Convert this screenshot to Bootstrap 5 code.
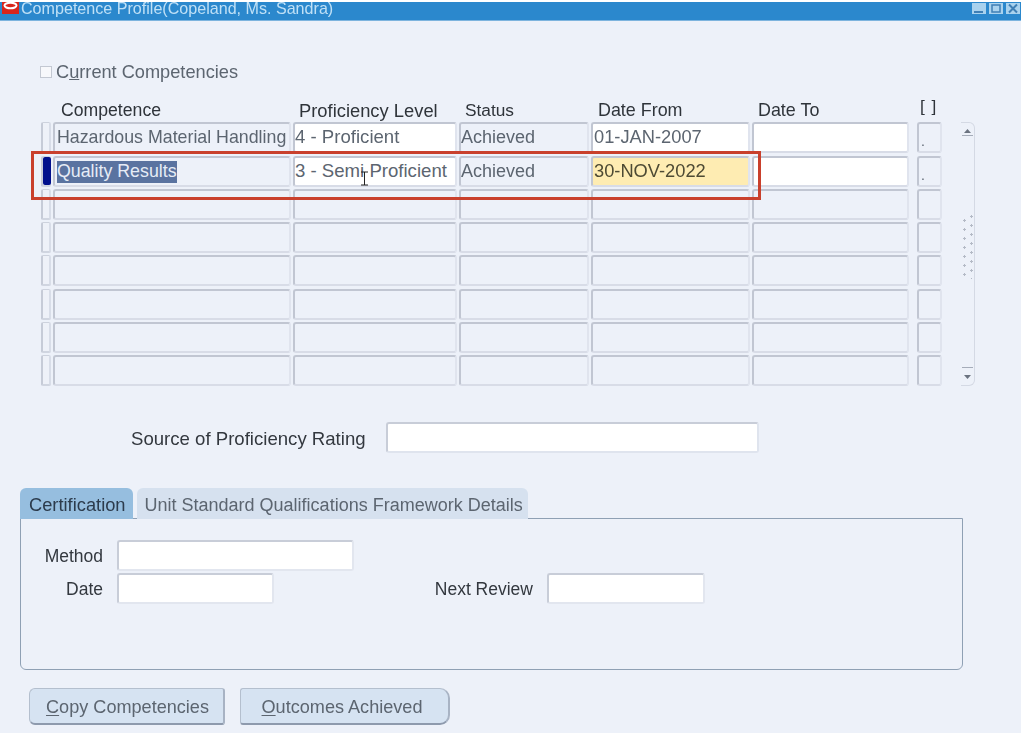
<!DOCTYPE html>
<html lang="en">
<head>
<meta charset="utf-8">
<title>Competence Profile</title>
<link rel="stylesheet" href="https://cdn.jsdelivr.net/npm/bootstrap@5.3.0/dist/css/bootstrap.min.css">
<style>
html,body{height:733px;overflow:hidden}
body{background:#edf1f9;font-family:"Liberation Sans",Arial,sans-serif;font-size:18.2px;color:#33383f;line-height:1.2;position:relative;filter:blur(.35px)}
.ttl{height:21px;background:linear-gradient(#fff 0 2px,#2b88cd 2px 20px,#7db4de 20px);color:#bfe0f6;font-size:16.1px;padding:0 1px 0 2px}
.ttl-txt{margin-left:2px;line-height:17px}
.ttl-logo{margin-top:2px}
.ttl-btns{gap:3px;margin-top:3px}
.wbtn{display:block}
.cur-row{margin:42px 0 0 40px;height:20px;gap:3px;color:#5c6570}
.cur-row .form-check-input{width:12px;height:12px;margin:-3px 1px 0 0;border:1px solid #c3c8d2;border-radius:0;background-color:#f7f8fb;flex:none}
.ora-wrap{margin:15px 0 0 41px}
.ora-grid{display:grid;grid-template-columns:10px 238px 164px 130px 159px 157px 31px;column-gap:2px;grid-template-rows:22px repeat(8,31px);row-gap:2.3px}
.hd{display:flex;align-items:center;color:#2f343a;white-space:nowrap;height:22px;padding-top:4px;font-size:17.9px}
.hd:nth-child(2){padding-left:8px;font-size:17.65px}.hd:nth-child(3){padding-left:6px;font-size:18.35px;padding-top:3px}.hd:nth-child(4){padding-left:6px;font-size:17.3px;padding-top:2px}.hd:nth-child(5){padding-left:7px}.hd:nth-child(6){padding-left:6px}
.hd.hd-sq{margin-left:9px;padding:0 0 6px;letter-spacing:1px;font-size:17.3px}
.fld{display:flex;align-items:center;border:2px solid;border-color:#c1c6d2 #e0e4ee #d8dce7 #c1c6d2;border-radius:3px;background:#edf1f9;padding:0;color:#5c6570;white-space:nowrap;overflow:hidden;min-height:0}
.fld.ed{background:#fff}
.fld.cur{background:#feecb2;color:#4d4a34}
.c1{padding-left:2px;font-size:17.8px}
.c2{font-size:18.6px}
.c3{font-size:18px}
.c4{padding-left:1px;font-size:18.3px}
.up1{padding-bottom:2px}
.dn1{padding-top:2px}
.rind{border-width:1px 2px 2px 2px;border-color:#cdd2dd #d8dde8 #d0d5e0 #c6cbd7;border-radius:2px;background:#eef1f8}
.rind-on{position:relative;overflow:visible}
.rind-on::after{content:"";position:absolute;left:0;top:0;bottom:0;width:8px;background:#000f8c;border-radius:2px}
.more{margin-left:6px;width:25px;padding:8px 0 0 2px;font-size:14px;color:#5c6570}
.sel{background:#5a73a0;color:#e6ecf6}
.scrl{width:14px;margin:24px 0 0 19px;height:264px;border:1px solid #d4d9e4;border-left:0;border-radius:0 6px 6px 0;position:relative;flex:none}
.scrl-dots{position:absolute;left:2px;top:92px;width:10px;height:64px;background-size:3px 9px,3px 9px;background-repeat:repeat-y,repeat-y;background-position:0 4px,7px 0;background-image:radial-gradient(circle at 50% 1.5px,#b4bac6 1px,transparent 1.2px),radial-gradient(circle at 50% 1.5px,#b4bac6 1px,transparent 1.2px)}
.scrl svg{position:absolute;left:1px}
.src-row{margin:36px 0 0 131px;height:31px}
.src-lab{width:234px;white-space:nowrap;font-size:18.6px;flex:none;padding-top:3px}
.src-row .fld{width:373px;height:31px;margin-left:21px;border-color:#c8cdd8 #dfe4ee #dfe4ee #c8cdd8}
.tab-area{margin:35px 58px 0 20px}
.ora-tabs{border:0;gap:4px;height:31px;flex-wrap:nowrap}
.ora-tabs .nav-link{height:31px;padding:0 5px 0 8px;margin:0;line-height:35px;font-size:18px;border:0;border-radius:6px 6px 0 0;background:#d6e1ef;color:#5c6570;white-space:nowrap}
.ora-tabs .nav-link.active{background:#96bedf;color:#2c3b4c;padding:0 7px 0 9px;font-size:18.3px;line-height:33px}
.ora-panel{height:152px;border:1px solid #8fa0b4;border-radius:0 0 6px 6px;background:#edf1f9;padding:21px 0 0 22px;margin-top:-1px;font-size:17.5px}
.frow{height:31px;margin-bottom:2px}
.flab{width:60px;text-align:right;margin-right:14px;color:#33383f;white-space:nowrap;flex:none;padding-top:2px}
.frow .fld{height:31px;border-color:#c8cdd8 #e2e6ef #e2e6ef #c8cdd8}
.w-m{width:237px}.w-d{width:157px}.w-n{width:158px}
.flab2{width:259px;text-align:right;margin-right:14px;color:#33383f;white-space:nowrap;flex:none;padding-top:2px}
.btn-row{margin:18px 0 0 29px;gap:15px}
.ora-btn{height:37px;padding:2px 0 0;font-size:18.1px;line-height:33px;color:#5c6570;background:#d6e3f2;border:1px solid #b4bfce;border-bottom:2px solid #8e9aad;border-right:2px solid #a8b3c4;border-radius:6px 3px 3px 6px;font-family:inherit}
.b1{width:196px;padding-left:2px}.b2{width:210px;border-radius:3px 10px 10px 3px;padding-right:5px}
.ora-btn u{text-underline-offset:2px}
.red-box{position:absolute;left:31px;top:151px;width:730px;height:49px;border:3px solid #c9402c;pointer-events:none}
.ibeam{position:absolute;left:360px;top:171px}
</style>
</head>
<body>
<div class="ttl d-flex align-items-start justify-content-between">
  <div class="d-flex align-items-start">
    <svg class="ttl-logo" width="17" height="12" viewBox="0 0 17 12" aria-hidden="true"><rect x="0" y="0" width="17" height="12" fill="#d9261c"/><ellipse cx="8.5" cy="3.5" rx="6" ry="2.8" fill="none" stroke="#fff" stroke-width="2"/></svg>
    <div class="ttl-txt">Competence Profile(Copeland, Ms. Sandra)</div>
  </div>
  <div class="ttl-btns d-flex">
    <svg class="wbtn" width="14" height="11" viewBox="0 0 14 11" aria-hidden="true"><rect width="14" height="11" fill="#a9d2ee"/><rect x="2" y="8" width="9" height="2" fill="#3f7fb5"/></svg>
    <svg class="wbtn" width="14" height="11" viewBox="0 0 14 11" aria-hidden="true"><rect width="14" height="11" fill="#a9d2ee"/><rect x="3" y="2" width="8" height="7" fill="none" stroke="#3f7fb5" stroke-width="1.5"/></svg>
    <svg class="wbtn" width="14" height="11" viewBox="0 0 14 11" aria-hidden="true"><rect width="14" height="11" fill="#a9d2ee"/><path d="M3 1.5l8 8M11 1.5l-8 8" stroke="#3f7fb5" stroke-width="2"/></svg>
  </div>
</div>

<div class="cur-row d-flex align-items-center">
  <input class="form-check-input" type="checkbox" aria-label="Current Competencies">
  <span>C<u>u</u>rrent Competencies</span>
</div>

<div class="ora-wrap d-flex align-items-start">
  <div class="ora-grid">
    <div class="hd"></div><div class="hd">Competence</div><div class="hd">Proficiency Level</div><div class="hd">Status</div><div class="hd">Date From</div><div class="hd">Date To</div><div class="hd hd-sq">[ ]</div>

    <div class="fld rind"></div><div class="fld c1">Hazardous Material Handling</div><div class="fld ed c2 up1">4 - Proficient</div><div class="fld c3">Achieved</div><div class="fld ed c4 up1">01-JAN-2007</div><div class="fld ed"></div><div class="fld more">.</div>
    <div class="fld rind rind-on"></div><div class="fld c1 dn1"><span class="sel">Quality Results</span></div><div class="fld ed c2">3 - Semi Proficient</div><div class="fld c3 dn1">Achieved</div><div class="fld cur c4">30-NOV-2022</div><div class="fld ed"></div><div class="fld more">.</div>
    <div class="fld rind"></div><div class="fld"></div><div class="fld"></div><div class="fld"></div><div class="fld"></div><div class="fld"></div><div class="fld more"></div>
    <div class="fld rind"></div><div class="fld"></div><div class="fld"></div><div class="fld"></div><div class="fld"></div><div class="fld"></div><div class="fld more"></div>
    <div class="fld rind"></div><div class="fld"></div><div class="fld"></div><div class="fld"></div><div class="fld"></div><div class="fld"></div><div class="fld more"></div>
    <div class="fld rind"></div><div class="fld"></div><div class="fld"></div><div class="fld"></div><div class="fld"></div><div class="fld"></div><div class="fld more"></div>
    <div class="fld rind"></div><div class="fld"></div><div class="fld"></div><div class="fld"></div><div class="fld"></div><div class="fld"></div><div class="fld more"></div>
    <div class="fld rind"></div><div class="fld"></div><div class="fld"></div><div class="fld"></div><div class="fld"></div><div class="fld"></div><div class="fld more"></div>
  </div>
  <div class="scrl">
    <svg width="11" height="12" viewBox="0 0 11 12" style="top:4px" aria-hidden="true"><path d="M5.5 2l3.5 4h-7z" fill="#6b7380"/><rect x="0" y="8" width="11" height="1" fill="#a5acb9"/></svg>
    <div class="scrl-dots"></div>
    <svg width="11" height="15" viewBox="0 0 11 15" style="bottom:3px" aria-hidden="true"><rect x="0" y="0" width="11" height="1" fill="#a5acb9"/><path d="M5.5 12l3.5-4h-7z" fill="#6b7380"/></svg>
  </div>
</div>

<div class="src-row d-flex align-items-center">
  <span class="src-lab">Source of Proficiency Rating</span>
  <div class="fld ed"></div>
</div>

<div class="tab-area">
  <ul class="nav nav-tabs ora-tabs">
    <li class="nav-item"><a class="nav-link active" href="#">Certification</a></li>
    <li class="nav-item"><a class="nav-link" href="#">Unit Standard Qualifications Framework Details</a></li>
  </ul>
  <div class="ora-panel">
    <div class="frow d-flex align-items-center"><span class="flab">Method</span><div class="fld ed w-m"></div></div>
    <div class="frow d-flex align-items-center"><span class="flab">Date</span><div class="fld ed w-d"></div><span class="flab2">Next Review</span><div class="fld ed w-n"></div></div>
  </div>
</div>

<div class="btn-row d-flex">
  <button type="button" class="btn ora-btn b1"><u>C</u>opy Competencies</button>
  <button type="button" class="btn ora-btn b2"><u>O</u>utcomes Achieved</button>
</div>

<div class="red-box"></div>
<svg class="ibeam" width="9" height="15" viewBox="0 0 9 15" aria-hidden="true"><path d="M1 1h7M4.5 1v13M1 14h7" stroke="#222" stroke-width="1" fill="none"/></svg>
</body>
</html>
